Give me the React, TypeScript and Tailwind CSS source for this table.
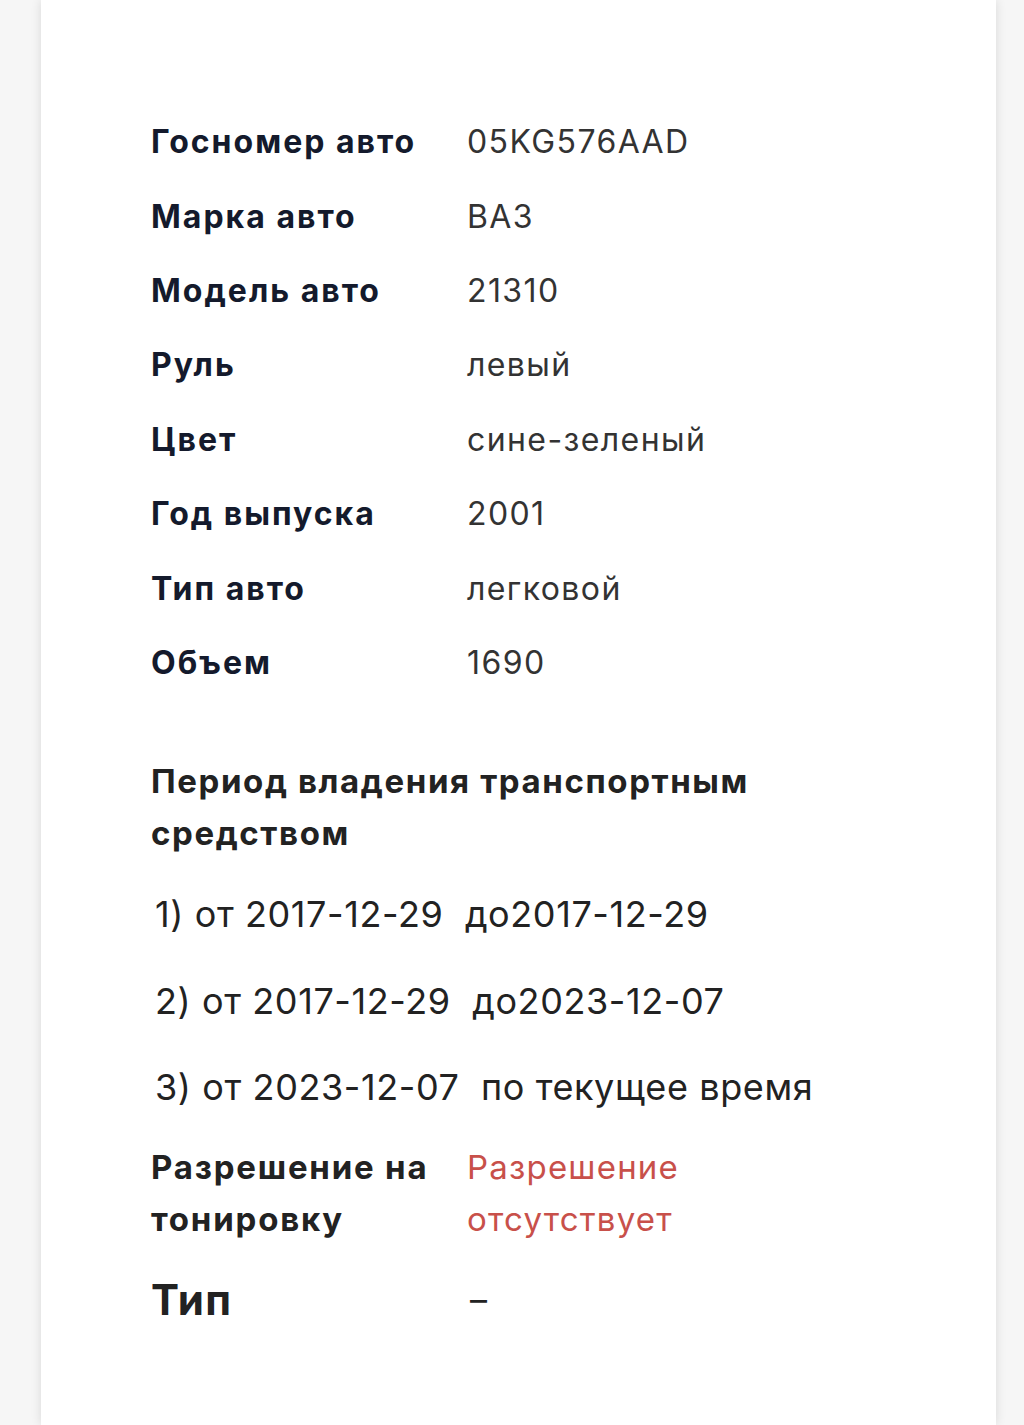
const rows: [string, string][] = [
  ['Госномер авто', '05KG576AAD'],
  ['Марка авто', 'ВАЗ'],
  ['Модель авто', '21310'],
  ['Руль', 'левый'],
  ['Цвет', 'сине-зеленый'],
  ['Год выпуска', '2001'],
  ['Тип авто', 'легковой'],
  ['Объем', '1690'],
];

const periods = [
  '1) от 2017-12-29\u00a0\u00a0до2017-12-29',
  '2) от 2017-12-29\u00a0\u00a0до2023-12-07',
  '3) от 2023-12-07\u00a0\u00a0по текущее время',
];

export default function App() {
  return (
    <div className="min-h-[1425px] bg-[#f6f6f6] font-['Inter',sans-serif]">
      <div className="ml-[41px] w-[955px] min-h-[1425px] bg-white shadow-[0_0_10px_rgba(0,0,0,0.12)] pl-[110px] pt-[105px]">
        {/* Vehicle info */}
        <div className="flex flex-col">
          {rows.map(([label, value]) => (
            <div key={label} className="flex items-center h-[74.4px]">
              <span className="w-[316px] shrink-0 text-[32px] font-bold text-[#141a2c] tracking-[2px]">
                {label}
              </span>
              <span className="text-[32px] font-normal text-[#333] tracking-[1.4px]">{value}</span>
            </div>
          ))}
        </div>

        {/* Ownership period */}
        <div className="mt-[55px]">
          <h3 className="w-[660px] text-[33px] leading-[52px] font-bold text-[#222] tracking-[1.6px]">
            Период владения транспортным средством
          </h3>
          <div className="mt-[12px] flex flex-col">
            {periods.map((p) => (
              <div key={p} className="flex items-center h-[86.5px] pl-[4px] text-[36px] text-[#222] tracking-[0.6px]">
                {p}
              </div>
            ))}
          </div>

          <div className="flex mt-[10px]">
            <span className="w-[316px] shrink-0 text-[33px] leading-[52px] font-bold text-[#222] tracking-[1.8px]">
              Разрешение на тонировку
            </span>
            <span className="w-[250px] text-[33px] leading-[52px] text-[#c8504a] tracking-[1.2px]">
              Разрешение отсутствует
            </span>
          </div>

          <div className="flex items-center h-[80px] mt-[15px]">
            <span className="w-[316px] shrink-0 text-[42px] font-bold text-[#222] tracking-[1.2px]">Тип</span>
            <span className="ml-[3px] text-[34px] text-[#222]">–</span>
          </div>
        </div>
      </div>
    </div>
  );
}
